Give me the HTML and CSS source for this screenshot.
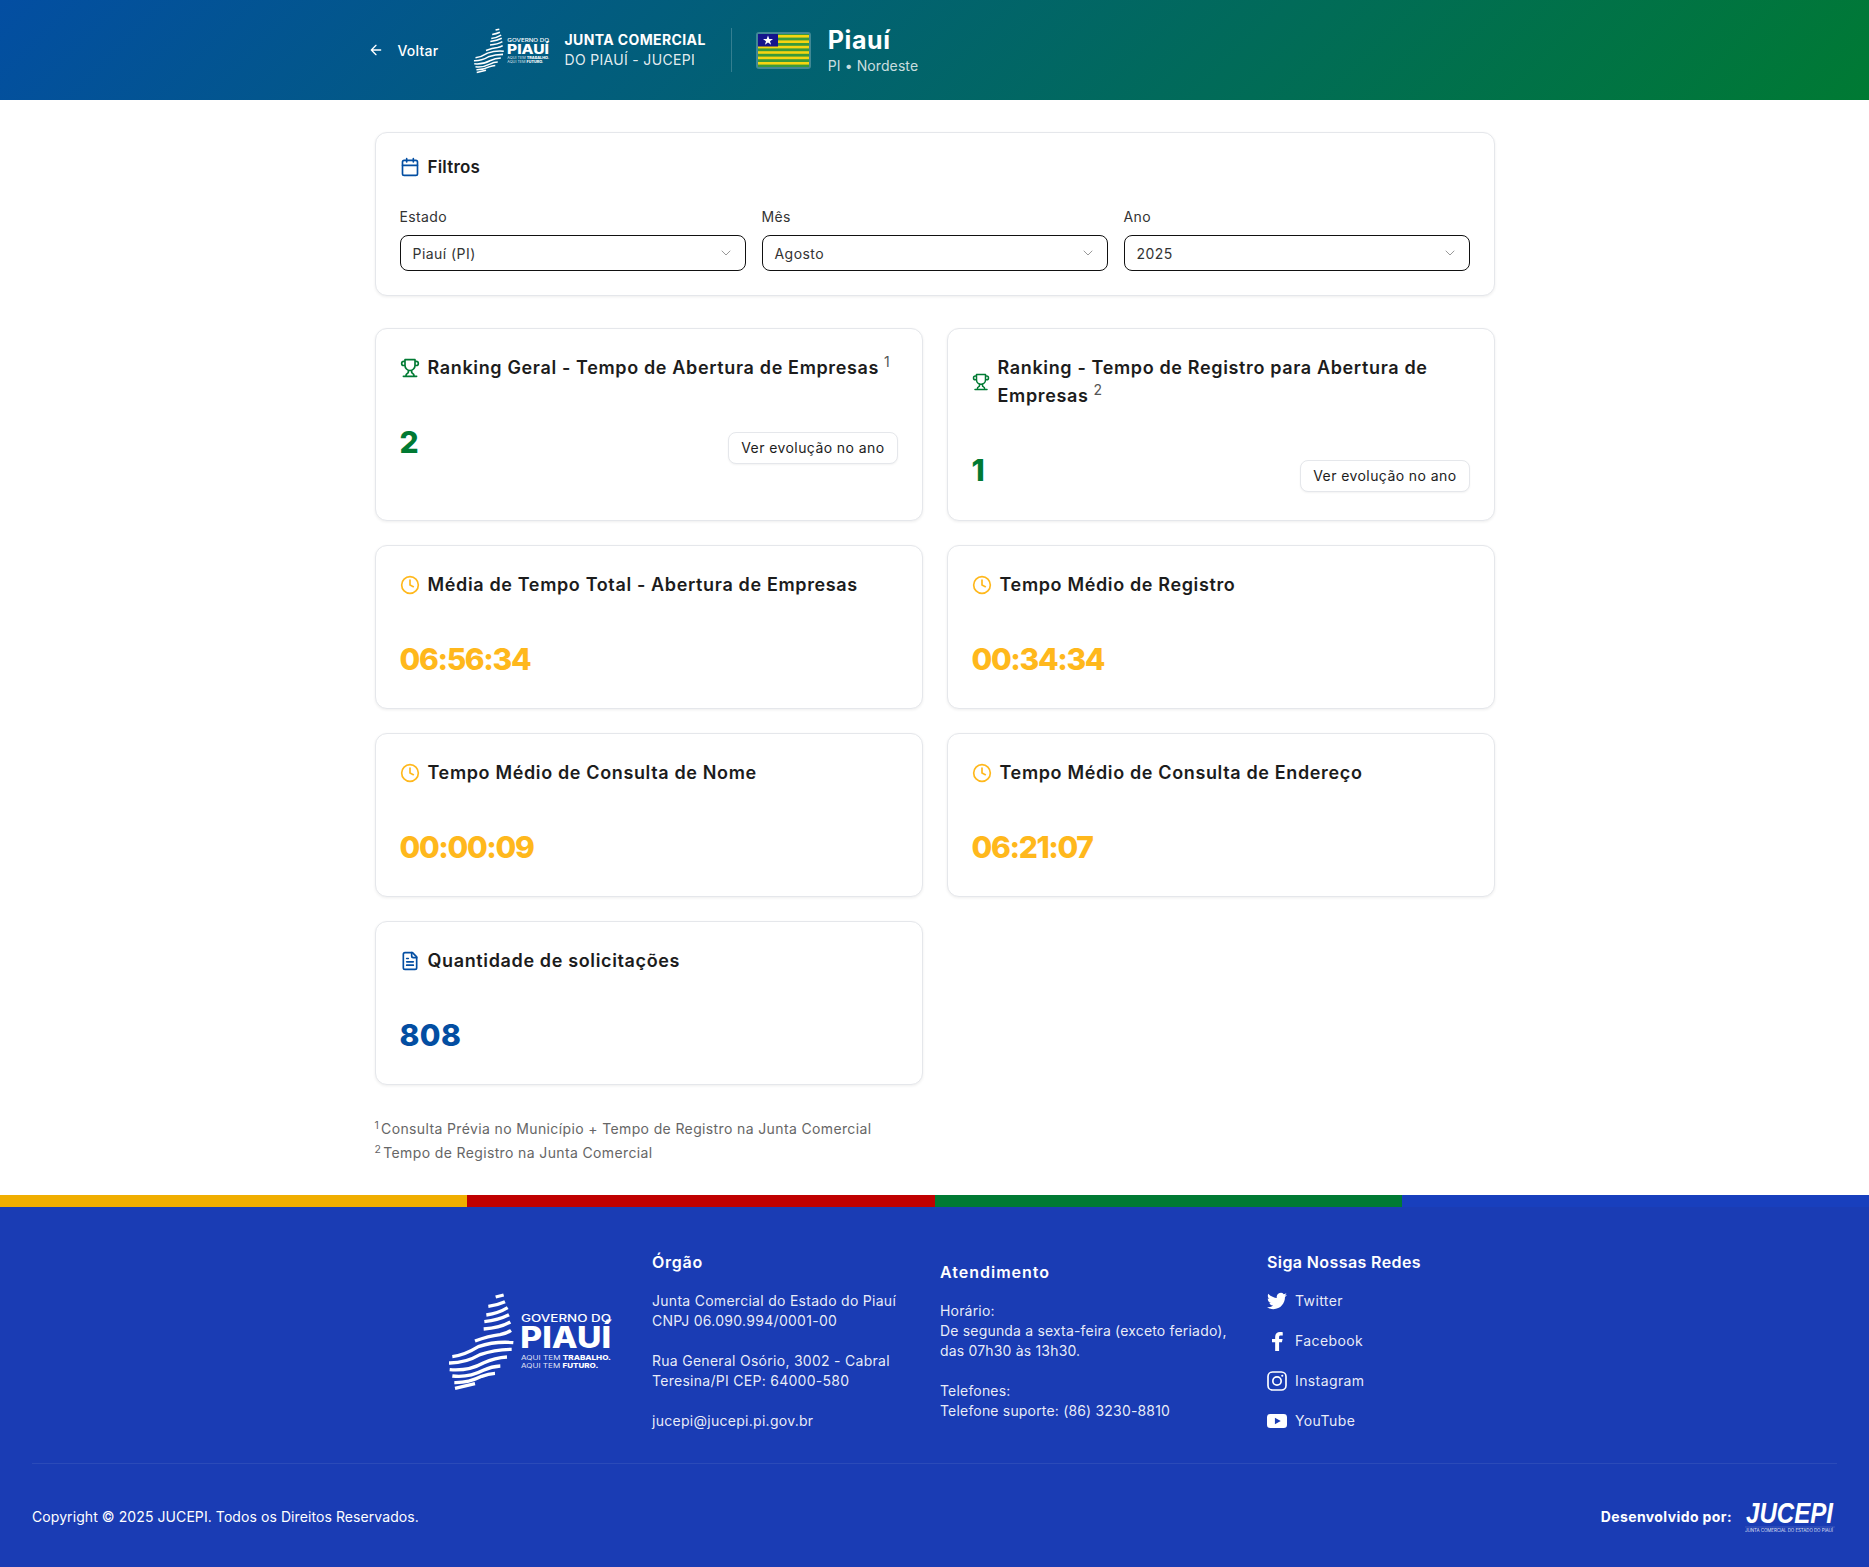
FILE: index.html
```html
<!DOCTYPE html>
<html lang="pt-BR">
<head>
<meta charset="utf-8">
<title>Piauí - JUCEPI</title>
<link rel="stylesheet" href="styles.css">
</head>
<body>
<svg class="sprite" aria-hidden="true">
  <symbol id="i-calendar" viewBox="0 0 24 24"><path d="M8 2v4M16 2v4M3 10h18"/><rect x="3" y="4" width="18" height="18" rx="2"/></symbol>
  <symbol id="i-trophy" viewBox="0 0 24 24"><path d="M6 9H4.5a2.5 2.5 0 0 1 0-5H6M18 9h1.5a2.5 2.5 0 0 0 0-5H18M4 22h16M10 14.66V17c0 .55-.47.98-.97 1.21C7.85 18.75 7 20.24 7 22M14 14.66V17c0 .55.47.98.97 1.21C16.15 18.75 17 20.24 17 22M18 2H6v7a6 6 0 0 0 12 0V2Z"/></symbol>
  <symbol id="i-clock" viewBox="0 0 24 24"><circle cx="12" cy="12" r="10"/><path d="M12 6v6l4 2"/></symbol>
  <symbol id="i-file" viewBox="0 0 24 24"><path d="M15 2H6a2 2 0 0 0-2 2v16a2 2 0 0 0 2 2h12a2 2 0 0 0 2-2V7Z"/><path d="M14 2v4a2 2 0 0 0 2 2h4M10 9H8M16 13H8M16 17H8"/></symbol>
  <symbol id="i-chevron" viewBox="0 0 24 24"><path d="m6 9 6 6 6-6"/></symbol>
  <symbol id="i-arrow" viewBox="0 0 24 24"><path d="m12 19-7-7 7-7M19 12H5"/></symbol>
  <symbol id="gov-logo" viewBox="0 0 510 330">
    <g class="logo-waves">
      <path d="M152 33 L176 27"/>
      <path d="M130 61 Q155 58 180 47"/>
      <path d="M124 87 Q160 82 188 65"/>
      <path d="M118 107 Q160 102 192 86"/>
      <path d="M116 129 Q165 126 196 108"/>
      <path d="M90 165 Q130 150 165 146 Q185 142 198 133"/>
      <path d="M22 212 Q60 207 100 182 Q150 165 205 170"/>
      <path d="M12 231 Q60 232 105 206 Q150 190 200 190"/>
      <path d="M14 251 Q70 256 115 231 Q150 215 186 213"/>
      <path d="M22 270 Q70 276 115 253 Q140 241 166 240"/>
      <path d="M28 290 Q70 291 110 271 Q130 263 150 262"/>
      <path d="M30 307 L90 293"/>
    </g>
    <text class="logo-gov" x="228" y="107" textLength="270" lengthAdjust="spacingAndGlyphs">GOVERNO DO</text>
    <text class="logo-state" x="226" y="186" textLength="272" lengthAdjust="spacingAndGlyphs">PIAUÍ</text>
    <text class="logo-tag" x="228" y="222" textLength="270" lengthAdjust="spacingAndGlyphs">AQUI TEM <tspan class="logo-tag-strong">TRABALHO.</tspan></text>
    <text class="logo-tag" x="228" y="246" textLength="232" lengthAdjust="spacingAndGlyphs">AQUI TEM <tspan class="logo-tag-strong">FUTURO.</tspan></text>
  </symbol>
</svg>

<header class="site-header">
  <div class="header-inner">
    <a class="back-link"><svg class="icon-back"><use href="#i-arrow"/></svg><span>Voltar</span></a>
    <div class="brand">
      <svg class="brand-logo"><use href="#gov-logo"/></svg>
      <div class="brand-text">
        <strong>JUNTA COMERCIAL</strong>
        <span>DO PIAUÍ - JUCEPI</span>
      </div>
    </div>
    <div class="state">
      <svg class="flag" viewBox="0 0 55 37">
        <rect width="55" height="37" rx="3" class="flag-frame"/>
        <rect x="2" y="2" width="51" height="33" class="flag-green"/>
        <g class="flag-yellow">
          <rect x="2" y="3" width="51" height="2.6"/><rect x="2" y="8.4" width="51" height="2.6"/><rect x="2" y="13.8" width="51" height="2.6"/><rect x="2" y="19.2" width="51" height="2.6"/><rect x="2" y="24.6" width="51" height="2.6"/><rect x="2" y="30" width="51" height="2.6"/>
        </g>
        <rect x="2" y="2" width="20" height="12.5" class="flag-blue"/>
        <polygon class="flag-star" points="12,3.4 13.3,7 17,7 14,9.2 15.1,12.8 12,10.6 8.9,12.8 10,9.2 7,7 10.7,7"/>
      </svg>
      <div class="state-text">
        <h1>Piauí</h1>
        <p>PI • Nordeste</p>
      </div>
    </div>
  </div>
</header>

<main class="page">
  <section class="card filters">
    <h2 class="card-title"><svg class="icon icon-blue"><use href="#i-calendar"/></svg><span class="filters-title">Filtros</span></h2>
    <div class="filter-grid">
      <div class="field"><span class="field-label">Estado</span><div class="select"><span>Piauí (PI)</span><svg class="icon-chevron"><use href="#i-chevron"/></svg></div></div>
      <div class="field"><span class="field-label">Mês</span><div class="select"><span>Agosto</span><svg class="icon-chevron"><use href="#i-chevron"/></svg></div></div>
      <div class="field"><span class="field-label">Ano</span><div class="select"><span>2025</span><svg class="icon-chevron"><use href="#i-chevron"/></svg></div></div>
    </div>
  </section>

  <section class="metrics">
    <article class="card metric metric-rank">
      <h2 class="card-title"><svg class="icon icon-green"><use href="#i-trophy"/></svg><span>Ranking Geral - Tempo de Abertura de Empresas<sup>1</sup></span></h2>
      <div class="metric-row"><div class="value value-green">2</div><button class="evolution">Ver evolução no ano</button></div>
    </article>
    <article class="card metric metric-rank">
      <h2 class="card-title"><svg class="icon icon-small icon-green"><use href="#i-trophy"/></svg><span>Ranking - Tempo de Registro para Abertura de Empresas<sup>2</sup></span></h2>
      <div class="metric-row"><div class="value value-green">1</div><button class="evolution">Ver evolução no ano</button></div>
    </article>
    <article class="card metric">
      <h2 class="card-title"><svg class="icon icon-amber"><use href="#i-clock"/></svg><span>Média de Tempo Total - Abertura de Empresas</span></h2>
      <div class="metric-row"><div class="value value-time">06:56:34</div></div>
    </article>
    <article class="card metric">
      <h2 class="card-title"><svg class="icon icon-amber"><use href="#i-clock"/></svg><span>Tempo Médio de Registro</span></h2>
      <div class="metric-row"><div class="value value-time">00:34:34</div></div>
    </article>
    <article class="card metric">
      <h2 class="card-title"><svg class="icon icon-amber"><use href="#i-clock"/></svg><span>Tempo Médio de Consulta de Nome</span></h2>
      <div class="metric-row"><div class="value value-time">00:00:09</div></div>
    </article>
    <article class="card metric">
      <h2 class="card-title"><svg class="icon icon-amber"><use href="#i-clock"/></svg><span>Tempo Médio de Consulta de Endereço</span></h2>
      <div class="metric-row"><div class="value value-time">06:21:07</div></div>
    </article>
    <article class="card metric">
      <h2 class="card-title"><svg class="icon icon-blue"><use href="#i-file"/></svg><span>Quantidade de solicitações</span></h2>
      <div class="metric-row"><div class="value value-blue">808</div></div>
    </article>
  </section>

  <section class="notes">
    <p><sup>1</sup> Consulta Prévia no Município + Tempo de Registro na Junta Comercial</p>
    <p><sup>2</sup> Tempo de Registro na Junta Comercial</p>
  </section>
</main>

<div class="stripes"><i class="s-yellow"></i><i class="s-red"></i><i class="s-green"></i><i class="s-blue"></i></div>

<footer class="site-footer">
  <div class="footer-cols">
    <svg class="footer-logo"><use href="#gov-logo"/></svg>
    <div class="fcol fcol-org">
      <h3>Órgão</h3>
      <p>Junta Comercial do Estado do Piauí<br>CNPJ 06.090.994/0001-00</p>
      <p>Rua General Osório, 3002 - Cabral<br>Teresina/PI CEP: 64000-580</p>
      <p>jucepi@jucepi.pi.gov.br</p>
    </div>
    <div class="fcol fcol-att">
      <h3>Atendimento</h3>
      <p>Horário:<br>De segunda a sexta-feira (exceto feriado),<br>das 07h30 às 13h30.</p>
      <p>Telefones:<br>Telefone suporte: (86) 3230-8810</p>
    </div>
    <div class="fcol fcol-social">
      <h3>Siga Nossas Redes</h3>
      <ul class="social">
        <li><svg viewBox="0 0 24 24"><path d="M23.953 4.57a10 10 0 01-2.825.775 4.958 4.958 0 002.163-2.723c-.951.555-2.005.959-3.127 1.184a4.92 4.92 0 00-8.384 4.482C7.69 8.095 4.067 6.13 1.64 3.162a4.822 4.822 0 00-.666 2.475c0 1.71.87 3.213 2.188 4.096a4.904 4.904 0 01-2.228-.616v.06a4.923 4.923 0 003.946 4.827 4.996 4.996 0 01-2.212.085 4.936 4.936 0 004.604 3.417 9.867 9.867 0 01-6.102 2.105c-.39 0-.779-.023-1.17-.067a13.995 13.995 0 007.557 2.209c9.053 0 13.998-7.496 13.998-13.985 0-.21 0-.42-.015-.63A9.935 9.935 0 0024 4.59z"/></svg>Twitter</li>
        <li><svg viewBox="0 0 24 24"><path d="M14.500 13.500h3.400l.8-4h-4.200V7.200c0-1.100.4-1.900 2-1.900h2.400V1.500C18 1.400 16.800 1.200 15.500 1.200 12.200 1.200 9.800 3.400 9.800 7v2.500H6v4h3.800V24h4.700z"/></svg>Facebook</li>
        <li><svg class="social-outline" viewBox="0 0 24 24"><rect x="1.200" y="1.200" width="21.600" height="21.600" rx="5.500"/><circle cx="12" cy="12" r="5"/><circle class="social-dot" cx="18.300" cy="5.700" r="1.300"/></svg>Instagram</li>
        <li><svg viewBox="0 0 24 24"><path fill-rule="evenodd" d="M4 3.500h16a4 4 0 0 1 4 4v9a4 4 0 0 1-4 4H4a4 4 0 0 1-4-4v-9a4 4 0 0 1 4-4zM9.500 8v8l7-4z"/></svg>YouTube</li>
      </ul>
    </div>
  </div>
  <div class="footer-bottom">
    <p class="copyright">Copyright © 2025 JUCEPI. Todos os Direitos Reservados.</p>
    <div class="credit">
      <strong>Desenvolvido por:</strong>
      <svg class="jucepi-logo" viewBox="0 0 90 38">
        <text class="jucepi-word" x="1" y="26" textLength="87" lengthAdjust="spacingAndGlyphs">JUCEPI</text>
        <line class="jucepi-rule" x1="0" y1="30" x2="90" y2="30"/>
        <text class="jucepi-sub" x="0" y="35" textLength="88">JUNTA COMERCIAL DO ESTADO DO PIAUÍ</text>
      </svg>
    </div>
  </div>
</footer>
</body>
</html>
```

FILE: styles.css
```css
* { box-sizing: border-box; }
html, body { margin: 0; padding: 0; }
body {
  font-family: "Inter", "Liberation Sans", sans-serif;
  color: #1a1a1a;
  background: #fff;
  width: 1869px;
}
h1, h2, h3, p, ul { margin: 0; padding: 0; }
.sprite { position: absolute; width: 0; height: 0; overflow: hidden; }

/* header */
.site-header {
  height: 100px;
  background: linear-gradient(135deg, #034ea2 0%, #007a33 100%);
  color: #fff;
  display: flex;
  align-items: center;
}
.header-inner {
  width: 1120px;
  margin: 0 auto;
  display: flex;
  align-items: center;
}
.back-link {
  display: flex;
  align-items: center;
  gap: 14px;
  margin-left: -7px;
  width: 104px;
  font-size: 14px;
  font-weight: 500;
  letter-spacing: .2px;
}
.icon-back { width: 16px; height: 16px; flex: none; fill: none; stroke: #fff; stroke-width: 2; stroke-linecap: round; stroke-linejoin: round; }
.brand {
  display: flex;
  align-items: center;
  gap: 14px;
  padding-right: 25px;
  height: 44px;
  border-right: 1px solid rgba(255,255,255,.2);
}
.brand-logo { width: 79px; height: 51px; }
.brand-text { display: flex; flex-direction: column; font-size: 14px; line-height: 20px; }
.brand-text strong { font-weight: 700; letter-spacing: .38px; }
.brand-text span { color: rgba(255,255,255,.9); letter-spacing: .32px; }
.state { display: flex; align-items: center; gap: 17px; margin-left: 24px; }
.flag { width: 55px; height: 37px; }
.flag-frame { fill: rgba(255,255,255,.25); }
.flag-green { fill: #3a9a3a; }
.flag-yellow rect { fill: #f7d511; }
.flag-blue { fill: #15158c; }
.flag-star { fill: #fff; }
.state-text h1 { font-size: 25px; line-height: 32px; font-weight: 700; letter-spacing: .6px; }
.state-text p { font-size: 14px; line-height: 20px; color: rgba(255,255,255,.8); letter-spacing: .1px; }

/* main */
.page { width: 1120px; margin: 0 auto; padding: 32px 0 30px; }
.card {
  background: #fff;
  border: 1px solid #e5e7eb;
  border-radius: 12px;
  box-shadow: 0 1px 3px rgba(0,0,0,.07);
}
.card-title {
  display: flex;
  align-items: center;
  gap: 8px;
  font-size: 18px;
  line-height: 28px;
  font-weight: 600;
  letter-spacing: .64px;
  color: #1c1c1c;
}
.icon { width: 20px; height: 20px; flex: none; fill: none; stroke: currentColor; stroke-width: 2; stroke-linecap: round; stroke-linejoin: round; }
.icon-small { width: 18px; height: 18px; }
.icon-blue { color: #034ea2; }
.icon-green { color: #007a33; }
.icon-amber { color: #ffb81c; }
sup { font-size: 14px; line-height: 0; font-weight: 400; color: #555; letter-spacing: 0; margin-left: 5px; vertical-align: 7px; }

.filters { height: 164px; padding: 20px 24px 24px; margin-bottom: 32px; }
.filters-title { font-size: 17px; letter-spacing: .2px; }
.filter-grid { display: grid; grid-template-columns: repeat(3, 1fr); gap: 16px; margin-top: 26px; }
.field-label { display: block; font-size: 14px; line-height: 20px; letter-spacing: .35px; color: #333; margin-bottom: 8px; }
.select {
  height: 36px;
  border: 1px solid #111;
  border-radius: 8px;
  padding: 0 11px 0 12px;
  display: flex;
  align-items: center;
  justify-content: space-between;
  font-size: 14px;
  letter-spacing: .45px;
  color: #333;
}
.icon-chevron { width: 16px; height: 16px; fill: none; stroke: #999; stroke-width: 1.5; stroke-linecap: round; stroke-linejoin: round; }

.metrics { display: grid; grid-template-columns: 1fr 1fr; gap: 24px; }
.metric { padding: 25px 24px 19px; }
.metric-rank { padding-bottom: 20px; }
.metric-row { display: flex; align-items: center; justify-content: space-between; margin-top: 42px; }
.value { font-size: 30px; line-height: 36px; font-weight: 800; letter-spacing: .35px; margin-bottom: 12px; }
.value-green { color: #007a33; }
.value-time { color: #ffb81c; letter-spacing: -1.35px; }
.value-blue { color: #034ea2; }
.evolution {
  font: 400 14px/20px "Inter", "Liberation Sans", sans-serif;
  letter-spacing: .42px;
  color: #1c1c1c;
  height: 32px;
  padding: 0 12px;
  background: #fff;
  border: 1px solid #e5e7eb;
  border-radius: 8px;
  box-shadow: 0 1px 2px rgba(0,0,0,.05);
}

.notes { margin-top: 32px; font-size: 14px; line-height: 24px; color: #666; letter-spacing: .37px; }
.notes sup { font-size: 10.500px; margin: 0 -2px 0 0; vertical-align: 5px; color: #666; }

/* stripes + footer */
.stripes { display: grid; grid-template-columns: repeat(4, 1fr); height: 12px; }
.s-yellow { background: #f0ae00; }
.s-red { background: #c00000; }
.s-green { background: #007a33; }
.s-blue { background: #183fbd; }
.site-footer { height: 360px; background: #1a3cb4; color: #fff; padding: 43px 32px 0; }
.footer-cols { display: flex; justify-content: center; align-items: center; gap: 40px; padding-bottom: 32px; border-bottom: 1px solid rgba(255,255,255,.08); }
.footer-logo { width: 170px; height: 110px; flex: none; margin: 0 -3px 0 -4px; }
.fcol { flex: none; font-size: 14px; line-height: 20px; white-space: nowrap; }
.fcol-org { width: 248px; }
.fcol-att { width: 287px; }
.fcol-social { width: 153px; }
.fcol h3 { font-size: 16px; line-height: 24px; font-weight: 600; letter-spacing: .75px; margin-bottom: 17px; }
.fcol-att h3 { letter-spacing: 1px; }
.fcol-social h3 { letter-spacing: .4px; }
.fcol p { margin-bottom: 20px; letter-spacing: .28px; color: rgba(255,255,255,.92); }
.fcol-att p { letter-spacing: .18px; }
.fcol p:last-child { margin-bottom: 0; }
.social { list-style: none; display: flex; flex-direction: column; gap: 20px; }
.social li { display: flex; align-items: center; gap: 8px; height: 20px; letter-spacing: .4px; color: rgba(255,255,255,.92); }
.social svg { width: 20px; height: 20px; flex: none; fill: #fff; }
.social-outline rect, .social-outline circle { fill: none; stroke: #fff; stroke-width: 2; }
.social-outline .social-dot { fill: #fff; stroke: none; }
.footer-bottom { display: flex; justify-content: space-between; align-items: center; height: 104px; padding-right: 2px; }
.copyright { font-size: 14px; letter-spacing: .08px; }
.credit { display: flex; align-items: center; gap: 13px; font-size: 14px; }
.credit strong { font-weight: 700; letter-spacing: .4px; }
.jucepi-logo { width: 90px; height: 38px; }
.jucepi-word { font-family: "Liberation Sans Narrow", "Liberation Sans", sans-serif; font-size: 30px; font-weight: 700; font-style: italic; fill: #fff; }
.jucepi-rule { stroke: rgba(255,255,255,.3); stroke-width: .5; }
.jucepi-sub { font-size: 4.500px; fill: rgba(255,255,255,.85); }

/* logo */
.logo-waves path { fill: none; stroke: #fff; stroke-width: 10; }
.logo-gov { font-size: 30px; font-weight: 500; fill: #fff; }
.logo-state { font-size: 88px; font-weight: 800; fill: #fff; }
.logo-tag { font-size: 20px; font-weight: 400; fill: rgba(255,255,255,.9); }
.logo-tag-strong { font-weight: 800; fill: #fff; }
```
